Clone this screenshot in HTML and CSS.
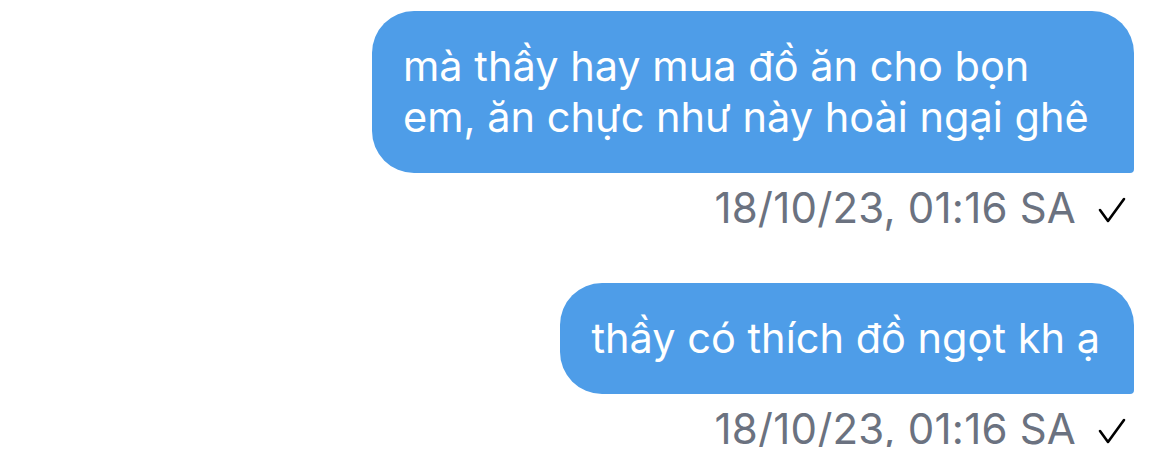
FILE: index.html
```html
<!DOCTYPE html>
<html lang="vi">
<head>
  <meta charset="UTF-8" />
  <title>Chat</title>
  <link rel="stylesheet" href="styles.css">
</head>
<body>
  <div class="chat">
    <div class="msg">
      <div class="bubble">mà thầy hay mua đồ ăn cho bọn em, ăn chực như này hoài ngại ghê</div>
      <div class="meta">
        <span class="time">18/10/23, 01:16 SA</span>
        <svg class="tick" viewBox="0 0 28 28" width="28" height="28"><path d="M2 14 L10 25 L26 3" fill="none" stroke="#000" stroke-width="2.6" stroke-linecap="round" stroke-linejoin="round"/></svg>
      </div>
    </div>
    <div class="msg">
      <div class="bubble">thầy có thích đồ ngọt kh ạ</div>
      <div class="meta">
        <span class="time">18/10/23, 01:16 SA</span>
        <svg class="tick" viewBox="0 0 28 28" width="28" height="28"><path d="M2 14 L10 25 L26 3" fill="none" stroke="#000" stroke-width="2.6" stroke-linecap="round" stroke-linejoin="round"/></svg>
      </div>
    </div>
  </div>
</body>
</html>
```

FILE: styles.css
```css
html, body {
  margin: 0;
  padding: 0;
  background: #fff;
  font-family: Inter, "Noto Sans", sans-serif;
}

.chat {
  display: flex;
  flex-direction: column;
  align-items: flex-end;
  padding: 11px 36px 0 0;
  gap: 57px;
}

.msg {
  display: flex;
  flex-direction: column;
  align-items: flex-end;
}

.bubble {
  box-sizing: border-box;
  max-width: 762px;
  background: #4e9de8;
  color: #fff;
  font-size: 41.5px;
  line-height: 51px;
  padding: 30px 34px 30px 31px;
  border-radius: 42px 42px 4px 42px;
}

.meta {
  display: flex;
  align-items: center;
  gap: 22px;
  margin-top: 17px;
  margin-right: 8px;
  height: 36px;
}

.time {
  color: #6b7280;
  font-size: 42px;
  line-height: 36px;
  letter-spacing: 0.2px;
}

.tick {
  display: block;
  margin-top: 4px;
}
```
